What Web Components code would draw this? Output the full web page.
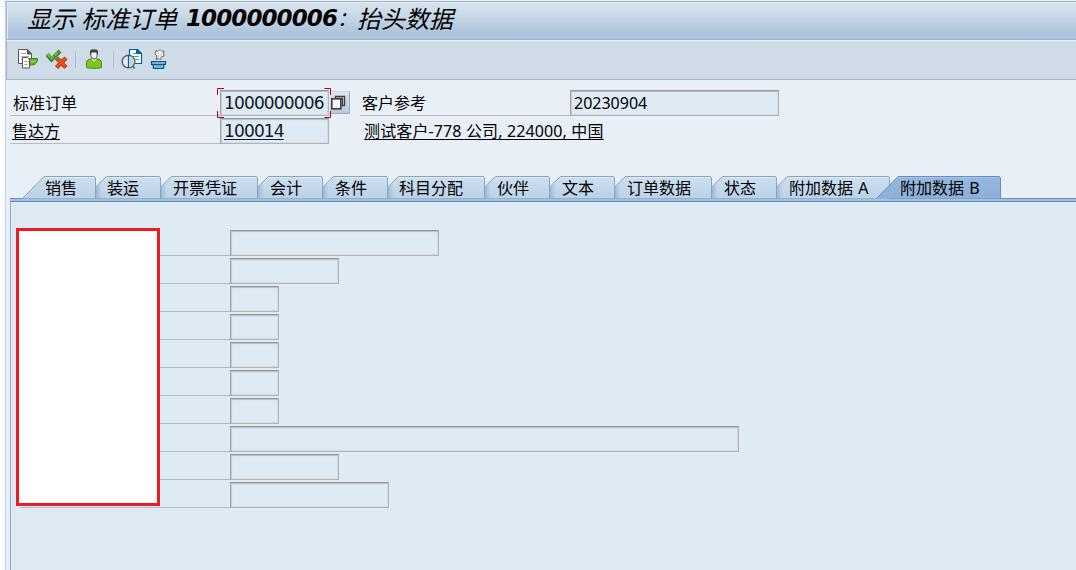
<!DOCTYPE html>
<html lang="zh-CN"><head><meta charset="utf-8"><title>显示 标准订单</title>
<style>
html,body{margin:0;height:100%;overflow:hidden}
body{background:#fff;color:#000;font-family:"Noto Sans","Noto Sans CJK SC",sans-serif;font-size:16px}
</style></head><body>
<order-app></order-app>
<script>
function element(name, html, setup){
  const t=document.createElement('template'); t.innerHTML=html;
  customElements.define(name, class extends HTMLElement{
    constructor(){super();this.attachShadow({mode:'open'}).appendChild(t.content.cloneNode(true));}
    connectedCallback(){ if(setup) setup(this,this.shadowRoot); }
  });
}
element('title-bar',`<style>
:host{display:block;box-sizing:border-box;height:39px;margin-top:1px;border-top:1px solid #a3b2c5;border-left:1px solid #a3b2c5;border-bottom:1px solid #9fb1c8;background:linear-gradient(#d6e3ee,#cbdbe8 30%,#adc4dc 85%,#afc4de);padding-left:20px;white-space:pre;font-size:24px;font-style:italic;box-shadow:inset 1px 1px #e5edf4}
.wrap{display:flex;height:35px;line-height:33px}
::slotted(b){font-family:"DejaVu Sans";font-size:23px;letter-spacing:-.9px;font-weight:700;margin-left:2.500px}
</style><div class="wrap"><slot></slot></div>`);
element('tool-bar',`<style>
:host{display:flex;box-sizing:border-box;height:40px;background:#cfdce7;border-top:1px solid #e8eff5;border-bottom:1px solid #a7b5c5;border-left:1px solid #a3b2c5;padding:8px 0 0 10px}
svg{width:22px;height:22px;flex:none}
i{width:1px;height:17px;margin-top:2px;background:#a5bfd9}
</style>
<svg viewBox="0 0 22 22"><path d="M1.500.5h9l4 4v10H1.500z" fill="#fff" stroke="#555"/><path d="M10.500 1v4h4" fill="#555" stroke="#555"/><path d="M4 4.500h5M4 7.500h8M4 10.500h3" stroke="#aaa"/><path d="M12 9.500h8.500c0 4-2 6.500-6 6.500H12z" fill="#69b52d" stroke="#39841c"/><path d="M14 12.500h5" stroke="#9bd568"/><path d="M5.500 8.500h5l2 2v8.500h-7z" fill="#fff" stroke="#555"/><path d="M7.500 12.500h3M7.500 15.500h3" stroke="#999"/></svg>
<svg viewBox="0 0 22 22" style="margin-left:7px"><path d="M1 5.500l4.500 5L14 2" fill="none" stroke="#397f36" stroke-width="4.200"/><path d="M1.500 5.500l4 4L13 2.500" fill="none" stroke="#76c53d" stroke-width="2" stroke-dasharray="4 1"/><path d="M10.500 9l9.500 9.500M20 9l-9.500 9.500" stroke="#a83d13" stroke-width="4.400"/><path d="M11 9.500l8.500 8.500M19.500 9.500L11 18" stroke="#e65318" stroke-width="2.600"/></svg>
<i style="margin-left:7px"></i>
<svg viewBox="0 0 22 22" style="margin-left:8px"><path d="M2.500 18.500v-5c0-2 2-3.500 4-3.500h7c2 0 4 1.500 4 3.500v5c0 1-15 1-15 0z" fill="#80c313" stroke="#438b36"/><path d="M8 8v3l2 1.500 2-1.500V8" fill="#fff" stroke="#aaa" stroke-width=".6"/><ellipse cx="10" cy="5.500" rx="3.200" ry="4.500" fill="#f5f5f5" stroke="#777" stroke-width="1.300"/><path d="M6 6V2.500Q6 .5 8 .5h4q2 0 2 2V6q-1-1-1.500-2.500h-5Q7 5 6 6" fill="#444"/></svg>
<i style="margin-left:7px"></i>
<svg viewBox="0 0 22 22" style="margin-left:7px"><path d="M8.500.5h8l4 4V14.500h-12z" fill="#fff" stroke="#00629a" stroke-width="1.200"/><path d="M15.500 0v4.500h5" fill="#00629a" stroke="#00629a"/><path d="M12 4.500h3M12 7.500h6M14 10.500h4" stroke="#5599be"/><circle cx="7.500" cy="12.500" r="6.300" fill="#e5eef5" stroke="#666" stroke-width="1.600"/><path d="M7.500 6v13" stroke="#00629a" stroke-width="1.300"/><path d="M9 9h3v7H9" fill="#b8d5e9"/><path d="M12 17l1.500 2.500" stroke="#666" stroke-width="1.500"/></svg>
<svg viewBox="0 0 22 22" style="margin-left:7px"><path d="M6 1.500l2 1 2-2 2 2 2-.5-.5 3 .5 2-2.500.5-1 3-2-1-2.500 1 1-3.500L5 5z" fill="#fff" stroke="#666"/><path d="M7 5l2-2M10 7l2-4M8 9l1-3" stroke="#bbb" fill="none"/><path d="M1.500 12.500h14v3H14l-.5 4h-10l-.5-4H1.500z" fill="#7bb0d8" stroke="#00588b" stroke-width="1.200"/><path d="M3 15.500h11" stroke="#00588b"/></svg>`);
element('field-label',`<style>
:host{display:block;box-sizing:border-box;height:26px;border-bottom:1px solid #b8babd;line-height:27px;white-space:nowrap;padding-left:3px;flex:none;width:210px}
:host([link]){text-decoration:underline;text-underline-offset:2px;text-decoration-thickness:1px;padding-left:2px}
:host([plain]){border-color:transparent;letter-spacing:.13px}
</style><slot></slot>`);
element('text-field',`<style>
:host{display:block;box-sizing:border-box;flex:none;height:26px;border:1px solid #b0b3b5;border-top-color:#95989b;border-left-color:#9fa2a5;background:#dfebf4;line-height:24px;padding-left:3px;white-space:nowrap;box-shadow:inset 0 2px 1px -1px #b6bcc1,inset 2px 0 1px -1px #c5cdd3,inset -1px -1px #d4dde3}
:host([code]){font-family:"DejaVu Sans",sans-serif;font-size:17px;letter-spacing:-.85px;color:#111827}
:host([focus]){position:relative;z-index:1}
:host([link]){text-decoration:underline;text-underline-offset:2px;text-decoration-thickness:1px}
svg{display:none;position:absolute;left:-4px;top:-3px;width:115px;height:30px;overflow:visible}
:host([focus]) svg{display:block}
</style><slot></slot><svg><path d="M.5 7V.5H7M107.500 .5h6V7M.5 23v6.500H7M107.500 29.500h6V23" fill="none" stroke="#b30009"/></svg>`,
(h)=>{h.style.width=h.getAttribute('w')+'px'});
element('help-button',`<style>
:host{display:block;box-sizing:border-box;width:20px;height:23px;margin-top:1px;border-right:1px solid #9eaac3;border-bottom:1px solid #9eaac3;border-top:1px solid #ccd7e3;background:linear-gradient(#d9e4ee,#b7c8e6)}
svg{display:block}
</style><svg width="19" height="20"><path d="M5.500 4.500h9v9h-2v-7h-7z" fill="#fff" stroke="#443f3b" stroke-width="1.400"/><rect x="1.800" y="6.800" width="9" height="10" fill="#fff" stroke="#443f3b" stroke-width="1.700"/></svg>`);
element('page-tab',`<style>
:host{display:block;position:relative;height:22px;flex:none}
svg{position:absolute;top:0;left:0;overflow:visible}
span{position:relative;display:block;line-height:24px;white-space:nowrap;word-spacing:1px}
</style><svg height="23"><defs><linearGradient id="g" x2="0" y2="1"><stop class="a"/><stop class="b" offset="1"/></linearGradient><linearGradient id="s"><stop stop-color="#7f9dbc" stop-opacity=".55"/><stop offset="1" stop-color="#8fadcc" stop-opacity="0"/></linearGradient></defs><path class="p" fill="url(#g)"/><path class="sh" fill="url(#s)"/><path class="hi" fill="none" stroke="#e5f0f8" opacity=".8"/></svg><span><slot></slot></span>`,
(h,r)=>{
  const w=+h.getAttribute('w'),active=h.hasAttribute('active'),first=h.hasAttribute('first');
  h.style.width=w+'px';
  const full=active||first,s=first?0:active?-14:0;
  const d=full?`M${s+.5} 22.500L${s+22} .5H${w-1.500}L${w-.5} 2V22.500`:`M-.5 22.500V11L10.500 .5H${w-1.500}L${w-.5} 2V22.500`;
  const p=r.querySelector('.p');p.setAttribute('d',d);p.setAttribute('stroke',active?'#668fbd':'#84a4c5');
  r.querySelector('.hi').setAttribute('d',`M${full?s+23:11.500} 1.500H${w-2}`);
  if(active)r.querySelector('.hi').style.stroke='#a9c8e7';
  if(!full)r.querySelector('.sh').setAttribute('d','M0 11.500L6 6V22H0z');
  r.querySelector('.a').setAttribute('stop-color',active?'#94b8df':'#cee0ef');
  r.querySelector('.b').setAttribute('stop-color',active?'#8eafda':'#bbd1e7');
  r.querySelector('svg').setAttribute('width',w);
  r.querySelector('span').style.paddingLeft=h.getAttribute('t')+'px';
});
element('tab-strip',`<style>
:host{display:flex;box-sizing:border-box;height:26px;margin-left:4px;padding-left:12px;border-bottom:4px solid transparent;background:linear-gradient(#6c93bf,#6c93bf) 0 22px/100% 1px no-repeat,linear-gradient(#a2c1df,#a2c1df) 0 23px/100% 2px no-repeat,linear-gradient(#6089b8,#6089b8) 0 25px/100% 1px no-repeat;background-origin:border-box}
</style><slot></slot>`);
element('form-row',`<style>:host{display:flex;height:28px}</style><slot></slot>`);
element('tab-panel',`<style>
:host{display:block;position:relative;box-sizing:border-box;height:368px;margin-left:4px;border-left:1px solid #8dacce;background:#dfebf4;padding:28px 0 0 9px}
.mask{position:absolute;box-sizing:border-box;left:5px;top:26px;width:144px;height:278px;border:3px solid #ed1c24;background:#fff}
</style><slot></slot><div class="mask"></div>`);
element('order-app',`<style>
:host{display:block;box-sizing:border-box;height:570px;width:1076px;padding-left:5px;overflow:hidden;background:linear-gradient(90deg,#fff 3px,#f2f5fa 5px,transparent 5px)}
main{display:flow-root;height:570px;background:#e8eff6;border-left:1px solid #cad5e3}
.head{height:96px;padding:10px 0 0 4px;box-sizing:border-box}
.colon{font-size:20px;line-height:34px}
</style><main>
<title-bar><span>显示 标准订单 </span><b>1000000006</b><span class="colon">：</span><span>抬头数据</span></title-bar>
<tool-bar></tool-bar>
<section class="head">
<form-row><field-label>标准订单</field-label><text-field w="109" code focus>1000000006</text-field><help-button style="margin-left:1px"></help-button><field-label style="width:210px;margin-left:10px;padding-left:2px">客户参考</field-label><text-field w="209">20230904</text-field></form-row>
<form-row><field-label link>售达方</field-label><text-field w="109" code link>100014</text-field><field-label link plain style="width:400px;margin-left:33px">测试客户-778 公司, 224000, 中国</field-label></form-row>
</section>
<tab-strip>
<page-tab w="74" t="23" first>销售</page-tab><page-tab w="65" t="11">装运</page-tab><page-tab w="97" t="12">开票凭证</page-tab><page-tab w="65" t="12">会计</page-tab><page-tab w="65" t="12">条件</page-tab><page-tab w="97" t="11">科目分配</page-tab><page-tab w="65" t="12">伙伴</page-tab><page-tab w="65" t="12">文本</page-tab><page-tab w="97" t="12">订单数据</page-tab><page-tab w="65" t="12">状态</page-tab><page-tab w="113" t="12">附加数据 A</page-tab><page-tab w="111" t="10" active>附加数据 B</page-tab>
</tab-strip>
<tab-panel></tab-panel>
</main>`,(h,r)=>{
  const panel=r.querySelector('tab-panel');
  for(const w of [209,109,49,49,49,49,49,509,109,159]){
    const row=document.createElement('form-row'),label=document.createElement('field-label'),field=document.createElement('text-field');
    field.setAttribute('w',w);row.append(label,field);panel.append(row);
  }
});
</script></body></html>
